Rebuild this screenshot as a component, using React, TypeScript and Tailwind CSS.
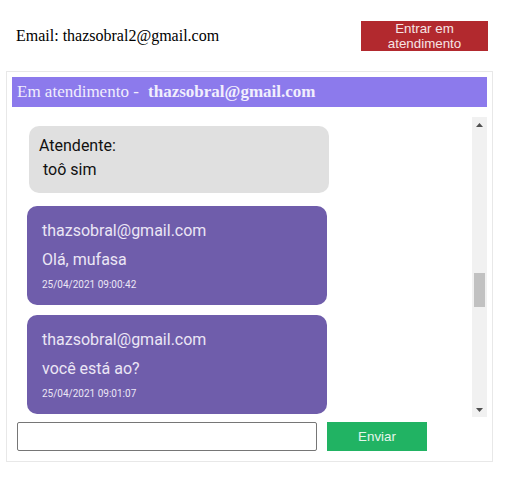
import React, { useLayoutEffect, useRef } from "react";

type Msg =
  | { kind: "agent"; text: string }
  | { kind: "user"; email: string; text: string; date: string };

const EMAIL = "thazsobral@gmail.com";

const before: Msg[] = [
  { kind: "agent", text: "Olá, tudo bem?" },
  { kind: "user", email: EMAIL, text: "Oi, tudo sim", date: "25/04/2021 08:41:03" },
  { kind: "agent", text: "Em que posso ajudar?" },
  { kind: "user", email: EMAIL, text: "Preciso de ajuda", date: "25/04/2021 08:42:15" },
  { kind: "agent", text: "Claro, pode falar" },
  { kind: "user", email: EMAIL, text: "Meu pedido atrasou", date: "25/04/2021 08:44:27" },
  { kind: "agent", text: "Vou verificar" },
  { kind: "user", email: EMAIL, text: "Obrigada", date: "25/04/2021 08:45:02" },
  { kind: "agent", text: "Um momento, por favor" },
  { kind: "user", email: EMAIL, text: "Ok", date: "25/04/2021 08:47:39" },
  { kind: "agent", text: "Já está resolvido" },
  { kind: "user", email: EMAIL, text: "Que bom!", date: "25/04/2021 08:52:11" },
  { kind: "user", email: EMAIL, text: "Tudo certo por aí?", date: "25/04/2021 08:58:20" },
];

const visible: Msg[] = [
  { kind: "agent", text: "toô sim" },
  { kind: "user", email: EMAIL, text: "Olá, mufasa", date: "25/04/2021 09:00:42" },
  { kind: "user", email: EMAIL, text: "você está ao?", date: "25/04/2021 09:01:07" },
];

const after: Msg[] = [
  { kind: "agent", text: "Estou sim" },
  { kind: "user", email: EMAIL, text: "Ótimo", date: "25/04/2021 09:02:30" },
  { kind: "agent", text: "Posso ajudar em algo?" },
  { kind: "user", email: EMAIL, text: "Só isso mesmo", date: "25/04/2021 09:03:12" },
  { kind: "agent", text: "Tenha um bom dia" },
  { kind: "user", email: EMAIL, text: "Obrigada!", date: "25/04/2021 09:04:45" },
  { kind: "agent", text: "Até logo" },
  { kind: "user", email: EMAIL, text: "Tchau", date: "25/04/2021 09:05:01" },
  { kind: "agent", text: "Atendimento encerrado" },
];

function Bubble({ m, innerRef }: { m: Msg; innerRef?: React.Ref<HTMLDivElement> }) {
  if (m.kind === "agent") {
    return (
      <div
        ref={innerRef}
        className="ml-[17px] mb-[13px] w-[300px] rounded-[10px] bg-[#e0e0e0] pt-[8px] pb-[11px] pl-[10px] text-[16px] leading-[24px] text-[#111]"
        style={{ fontFamily: "Roboto, sans-serif" }}
      >
        <p>Atendente:</p>
        <p className="pl-[4px]">{m.text}</p>
      </div>
    );
  }
  return (
    <div
      ref={innerRef}
      className="ml-[15px] mb-[10px] w-[300px] rounded-[10px] bg-[#6f5dab] px-[15px] pt-[15px] pb-[14px] text-[#ebe6f5]"
      style={{ fontFamily: "Roboto, sans-serif" }}
    >
      <p className="text-[16px] leading-[19px]">{m.email}</p>
      <p className="mt-[10px] text-[16px] leading-[19px]">{m.text}</p>
      <p className="mt-[10px] text-[10px] leading-[12px]">{m.date}</p>
    </div>
  );
}

function ScrollBar() {
  return (
    <div className="flex h-[300px] w-[15px] shrink-0 flex-col bg-[#f1f1f1]">
      <div className="flex h-[15px] items-center justify-center">
        <svg width="7" height="4" viewBox="0 0 7 4">
          <polygon points="3.5,0 7,4 0,4" fill="#505050" />
        </svg>
      </div>
      <div className="h-[141px]" />
      <div className="mx-[2px] h-[34px] bg-[#c1c1c1]" />
      <div className="flex-1" />
      <div className="flex h-[15px] items-center justify-center">
        <svg width="7" height="4" viewBox="0 0 7 4">
          <polygon points="0,0 7,0 3.5,4" fill="#505050" />
        </svg>
      </div>
    </div>
  );
}

export default function App() {
  const boxRef = useRef<HTMLDivElement>(null);
  const targetRef = useRef<HTMLDivElement>(null);

  useLayoutEffect(() => {
    if (boxRef.current && targetRef.current) {
      boxRef.current.scrollTop = targetRef.current.offsetTop - 9;
    }
  }, []);

  return (
    <div className="w-[505px] h-[479px] bg-white">
      <div className="flex items-center justify-between pl-[16px] pr-[17px] pt-[21px]">
        <span
          className="text-[16px] text-black"
          style={{ fontFamily: '"Liberation Serif", serif' }}
        >
          Email: thazsobral2@gmail.com
        </span>
        <button
          className="w-[127px] h-[30px] bg-[#b2292e] text-[13.33px] leading-[15px] text-[#f6e4e4]"
          style={{ fontFamily: '"Liberation Sans", Arial, sans-serif' }}
        >
          Entrar em atendimento
        </button>
      </div>

      <div className="ml-[6px] mt-[20px] w-[487px] border border-[#e8e8e8] p-[5px] pb-[10px]">
        <div
          className="h-[30px] bg-[#8c7aec] pl-[5px] text-[17px] leading-[29px] text-[#f1eefd]"
          style={{ fontFamily: '"Liberation Serif", serif' }}
        >
          Em atendimento - <strong className="ml-[5px] font-bold">thazsobral@gmail.com</strong>
        </div>

        <div className="mt-[10px] flex">
          <div
            ref={boxRef}
            className="relative h-[300px] flex-1 overflow-y-scroll pt-[9px] [scrollbar-width:none] [&::-webkit-scrollbar]:hidden"
          >
            {before.map((m, i) => (
              <Bubble key={"b" + i} m={m} />
            ))}
            {visible.map((m, i) => (
              <Bubble key={"v" + i} m={m} innerRef={i === 0 ? targetRef : undefined} />
            ))}
            {after.map((m, i) => (
              <Bubble key={"a" + i} m={m} />
            ))}
          </div>
          <ScrollBar />
        </div>

        <div className="mt-[5px] flex items-center pl-[5px]">
          <input
            type="text"
            className="h-[29px] w-[300px] rounded-[2px] border border-[#767676] bg-white px-[2px] outline-none"
          />
          <button
            className="ml-[10px] h-[29px] w-[100px] bg-[#21b363] text-[13.33px] text-[#e6f6ec]"
            style={{ fontFamily: '"Liberation Sans", Arial, sans-serif' }}
          >
            Enviar
          </button>
        </div>
      </div>
    </div>
  );
}
